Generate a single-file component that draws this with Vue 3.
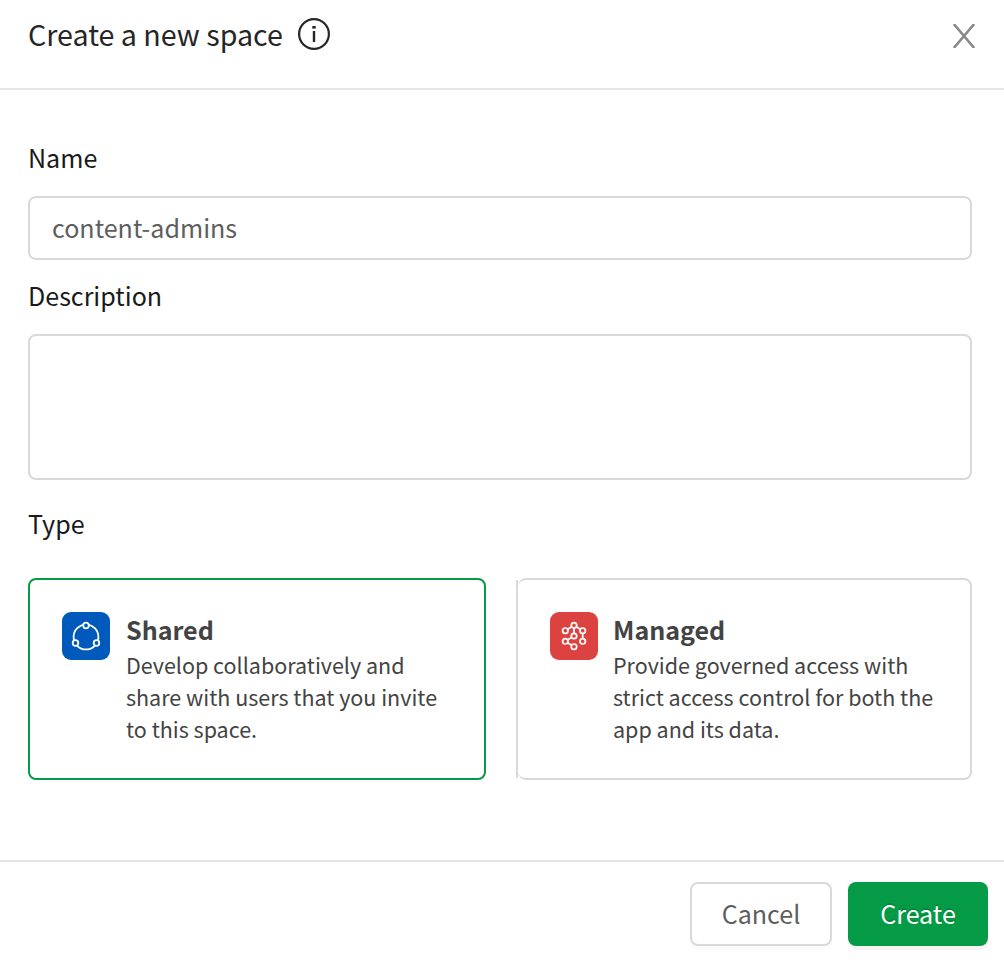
<script setup>
import { ref } from 'vue'

const name = ref('content-admins')
const description = ref('')
const selected = ref('shared')

const types = [
  {
    id: 'shared',
    title: 'Shared',
    lines: ['Develop collaboratively and', 'share with users that you invite', 'to this space.'],
  },
  {
    id: 'managed',
    title: 'Managed',
    lines: ['Provide governed access with', 'strict access control for both the', 'app and its data.'],
  },
]
</script>

<template>
  <div class="dialog">
    <header class="header">
      <h1 class="title">Create a new space</h1>
      <svg class="info" viewBox="0 0 32 32" width="32" height="32">
        <circle cx="16" cy="16" r="14.9" fill="none" stroke="#262626" stroke-width="2.2" />
        <rect x="14.3" y="8" width="3.4" height="2.6" fill="#262626" />
        <rect x="14.8" y="13" width="2.4" height="11" fill="#262626" />
      </svg>
      <button class="close" aria-label="Close">
        <svg viewBox="0 0 24 24" width="24" height="24">
          <path d="M1.8 0 L22.2 24 M22.2 0 L1.8 24" stroke="#8a8a8a" stroke-width="2.6" fill="none" />
        </svg>
      </button>
    </header>

    <main class="body">
      <label class="label" for="space-name">Name</label>
      <input id="space-name" v-model="name" class="field" type="text" />
      <label class="label label-description" for="space-description">Description</label>
      <textarea id="space-description" v-model="description" class="field area"></textarea>
      <div class="label label-type">Type</div>

      <div class="cards">
        <div
          v-for="type in types"
          :key="type.id"
          class="card"
          :class="[type.id, { selected: selected === type.id }]"
          @click="selected = type.id"
        >
          <svg v-if="type.id === 'shared'" class="icon" viewBox="0 0 48 48" width="48" height="48">
            <rect width="48" height="48" rx="9" fill="#005abb" />
            <g fill="none" stroke="#fff" stroke-width="1.8">
              <circle cx="24" cy="25" r="12.4" />
              <g fill="#005abb">
                <circle cx="24" cy="13.5" r="2.8" />
                <circle cx="13.5" cy="31" r="2.8" />
                <circle cx="34.5" cy="31" r="2.8" />
              </g>
            </g>
          </svg>
          <svg v-else class="icon" viewBox="0 0 48 48" width="48" height="48">
            <rect width="48" height="48" rx="9" fill="#dc423f" />
            <g fill="none" stroke="#fff" stroke-width="1.7">
              <path d="M15.3 18.7 L24 13.3 L32.7 18.7 V29.3 M24 13.3 V24 L15.3 29.3 L24 34.7" />
              <g fill="#dc423f">
                <circle cx="24" cy="13.3" r="2.7" />
                <circle cx="15.3" cy="18.7" r="2.7" />
                <circle cx="32.7" cy="18.7" r="2.7" />
                <circle cx="24" cy="24" r="2.7" />
                <circle cx="15.3" cy="29.3" r="2.7" />
                <circle cx="32.7" cy="29.3" r="2.7" />
                <circle cx="24" cy="34.7" r="2.7" />
              </g>
            </g>
          </svg>
          <div class="text">
            <h2 class="card-title">{{ type.title }}</h2>
            <p v-for="line in type.lines" :key="line" class="line">{{ line }}</p>
          </div>
        </div>
      </div>
    </main>

    <footer class="footer">
      <button class="button cancel">Cancel</button>
      <button class="button create">Create</button>
    </footer>
  </div>
</template>

<style>
body {
  background: #fff;
}
</style>

<style scoped>
.dialog,
.dialog * {
  box-sizing: border-box;
  margin: 0;
  font-family: "Noto Sans CJK SC", "Noto Sans", sans-serif;
}
.dialog {
  width: 1004px;
  height: 960px;
  display: flex;
  flex-direction: column;
  background: #fff;
  overflow: hidden;
}
.header {
  height: 90px;
  border-bottom: 2px solid #e6e6e6;
  display: flex;
  align-items: flex-start;
  padding: 15px 28px 0;
}
.title {
  font-size: 28.65px;
  font-weight: 400;
  line-height: 38px;
  color: #262626;
  width: 270px;
  white-space: nowrap;
}
.info {
  margin-top: 3px;
}
.close {
  margin: 9px 0 0 auto;
  padding: 0;
  border: 0;
  background: none;
  width: 24px;
  height: 24px;
}
.close svg {
  display: block;
}
.body {
  height: 770px;
  padding: 49px 32px 0 28px;
  display: flex;
  flex-direction: column;
}
.label {
  font-size: 25.07px;
  line-height: 36px;
  color: #1a1a1a;
}
.field {
  display: block;
  width: 944px;
  height: 64px;
  margin-top: 21px;
  padding: 0 22px 2px;
  border: 2px solid #d9d9d9;
  border-radius: 8px;
  background: #fff;
  outline: none;
  resize: none;
  font-size: 25.07px;
  color: #5e5e5e;
}
.label-description {
  margin-top: 17px;
}
.area {
  height: 146px;
}
.label-type {
  margin-top: 25px;
}
.cards {
  margin-top: 37px;
  display: flex;
  gap: 30px;
}
.card {
  width: 456px;
  height: 202px;
  padding: 32px;
  display: flex;
  gap: 15px;
  border: 2px solid #d9d9d9;
  border-radius: 8px;
  color: #434343;
}
.card.selected {
  width: 458px;
  gap: 16px;
  border-color: #059a45;
}
.managed:not(.selected) {
  width: 454px;
  margin-left: 2px;
  border-left: 0;
  position: relative;
}
.managed:not(.selected)::before {
  content: "";
  position: absolute;
  left: -2px;
  top: 0;
  bottom: 0;
  width: 2px;
  background: #d9d9d9;
}
.icon {
  flex: none;
}
.card-title {
  font-size: 25.07px;
  font-weight: 700;
  line-height: 34px;
  margin-bottom: 3px;
}
.line {
  font-size: 21.5px;
  line-height: 32px;
  white-space: nowrap;
}
.footer {
  height: 100px;
  border-top: 2px solid #e6e6e6;
  display: flex;
  justify-content: flex-end;
  gap: 16px;
  padding: 20px 16px 0;
}
.button {
  height: 64px;
  padding: 0 0 2px;
  border-radius: 8px;
  font-size: 25.07px;
}
.cancel {
  width: 142px;
  border: 2px solid #d9d9d9;
  background: #fff;
  color: #5e5e5e;
  box-shadow: 0 4px 0 rgba(0, 0, 0, 0.015);
}
.create {
  width: 140px;
  border: 0;
  background: #059a45;
  color: #fff;
  text-shadow: 0 -2px 0 rgba(0, 0, 0, 0.12);
  box-shadow: 0 4px 0 rgba(0, 0, 0, 0.045);
}
</style>
